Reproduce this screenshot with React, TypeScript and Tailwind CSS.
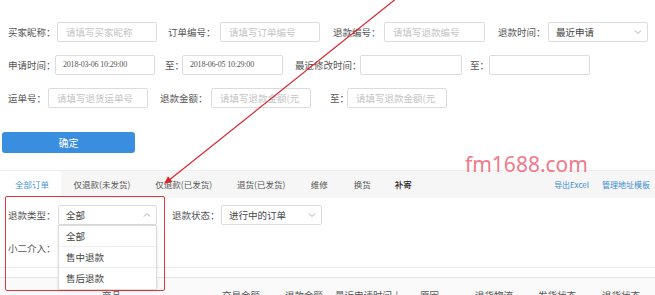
import React from "react";

const Chevron = ({ up = false }: { up?: boolean }) => (
  <svg width="8" height="8" viewBox="0 0 8 8" className="shrink-0">
    <polyline
      points={up ? "1,5.5 4,2.5 7,5.5" : "1,2.5 4,5.5 7,2.5"}
      fill="none"
      stroke="#aaa"
      strokeWidth="1"
    />
  </svg>
);

const Input = ({ w, ph, val }: { w: string; ph?: string; val?: string }) => (
  <div
    className={`${w} h-[20px] border border-[#dcdcdc] rounded-[2px] bg-white flex items-center whitespace-nowrap`}
  >
    {val ? (
      <span className="pl-[7px] text-[8px] tracking-[-0.2px] text-[#555] font-['Liberation_Serif',serif]">{val}</span>
    ) : ph ? (
      <span className="ml-[8px] mr-[10px] flex-1 min-w-0 overflow-hidden text-[9.5px] text-[#c4c4c4]">{ph}</span>
    ) : null}
  </div>
);

const Select = ({ w, val, up = false }: { w: string; val: string; up?: boolean }) => (
  <div
    className={`${w} h-[20px] border border-[#dcdcdc] rounded-[2px] bg-white flex items-center justify-between pl-[7px] pr-[5px] whitespace-nowrap`}
  >
    <span className="text-[9.5px] text-[#444]">{val}</span>
    <Chevron up={up} />
  </div>
);

const Label = ({ w, ml, children }: { w: string; ml?: string; children: React.ReactNode }) => (
  <span className={`${w} ${ml ?? ""} shrink-0 whitespace-nowrap text-[9.5px] text-[#555]`}>{children}</span>
);

export default function App() {
  return (
    <div className="relative w-[655px] h-[295px] overflow-hidden bg-white font-['Noto_Sans_CJK_SC','Noto_Sans',sans-serif] text-[#555]">
      {/* search form */}
      <div className="pt-[22px] pl-[8px] flex flex-col gap-[13px]">
        <div className="flex items-center">
          <Label w="w-[49px]">买家昵称：</Label>
          <Input w="w-[100px]" ph="请填写买家昵称" />
          <Label w="w-[52px]" ml="ml-[11px]">订单编号：</Label>
          <Input w="w-[100px]" ph="请填写订单编号" />
          <Label w="w-[51px]" ml="ml-[13px]">退款编号：</Label>
          <Input w="w-[101px]" ph="请填写退款编号" />
          <Label w="w-[50px]" ml="ml-[13px]">退款时间：</Label>
          <Select w="w-[100px]" val="最近申请" />
        </div>
        <div className="flex items-center">
          <Label w="w-[47px]">申请时间：</Label>
          <Input w="w-[100px]" val="2018-03-06 10:29:00" />
          <Label w="w-[17px]" ml="ml-[10px]">至：</Label>
          <Input w="w-[101px]" val="2018-06-05 10:29:00" />
          <Label w="w-[65px]" ml="ml-[12px]">最近修改时间：</Label>
          <Input w="w-[102px]" />
          <Label w="w-[19px]" ml="ml-[8px]">至：</Label>
          <Input w="w-[101px]" />
        </div>
        <div className="flex items-center">
          <Label w="w-[40px]">运单号：</Label>
          <Input w="w-[100px]" ph="请填写退货运单号" />
          <Label w="w-[51px]" ml="ml-[12px]">退款金额：</Label>
          <Input w="w-[100px]" ph="请填写退款金额(元)" />
          <Label w="w-[17px]" ml="ml-[19px]">至：</Label>
          <Input w="w-[100px]" ph="请填写退款金额(元)" />
        </div>
      </div>

      {/* confirm button */}
      <div className="pl-[2px] mt-[24px]">
        <div className="w-[133px] h-[21px] rounded-[3px] bg-[#3a8ee0] flex items-center justify-center text-white text-[10px]">
          确定
        </div>
      </div>

      {/* tabs */}
      <div className="mt-[17px] h-[28px] bg-[#f6f6f6] border-t border-[#efefef] flex items-stretch text-[8.5px] whitespace-nowrap">
        <div className="pl-[15px] pr-[12px] bg-white flex items-center text-[#4a96d6]">全部订单</div>
        <div className="px-[12.5px] flex items-center text-[#555]">仅退款(未发货)</div>
        <div className="px-[12.5px] flex items-center text-[#555]">仅退款(已发货)</div>
        <div className="px-[12.5px] flex items-center text-[#555]">退货(已发货)</div>
        <div className="px-[13px] flex items-center text-[#555]">维修</div>
        <div className="px-[13px] flex items-center text-[#555]">换货</div>
        <div className="px-[11px] flex items-center text-[#222] font-medium">补寄</div>
        <div className="ml-auto flex items-center gap-[13px] pr-[5px] text-[8px] text-[#3c8dd0]">
          <span>导出Excel</span>
          <span>管理地址模板</span>
        </div>
      </div>

      {/* filters */}
      <div className="pl-[8px] pt-[7px]">
        <div className="flex items-center">
          <Label w="w-[50px]">退款类型：</Label>
          <Select w="w-[99px]" val="全部" up />
          <Label w="w-[49px]" ml="ml-[15px]">退款状态：</Label>
          <Select w="w-[101px]" val="进行中的订单" />
        </div>
        <div className="mt-[13px] h-[20px] flex items-center">
          <Label w="w-[50px]">小二介入：</Label>
        </div>
      </div>
      <div className="mt-[9px] border-t border-[#ececec] h-[10px]" />
      <div className="border-t border-[#e6e6e6] bg-[#fafafa] h-[30px] pt-[10px] flex text-[9.5px] text-[#555] whitespace-nowrap">
        <span className="w-[222px] pl-[102px]">商品</span>
        <span className="w-[63px]">交易金额</span>
        <span className="w-[50px]">退款金额</span>
        <span className="w-[85px]">最近申请时间↓</span>
        <span className="w-[55px]">原因</span>
        <span className="w-[63px]">退货物流</span>
        <span className="w-[64px]">发货状态</span>
        <span>退货状态</span>
      </div>

      {/* dropdown menu */}
      <div className="absolute left-[58px] top-[225px] w-[99px] bg-white border border-[#dcdcdc] shadow-sm text-[9.5px] text-[#444]">
        <div className="h-[21px] border-b border-[#eee] flex items-center pl-[7px]">全部</div>
        <div className="h-[21px] border-b border-[#eee] flex items-center pl-[7px]">售中退款</div>
        <div className="h-[21px] flex items-center pl-[7px]">售后退款</div>
      </div>

      {/* red highlight box */}
      <div className="absolute left-[5px] top-[196px] w-[160px] h-[95px] border-[1.5px] border-[#e0363e] rounded-[2px]" />

      {/* watermark */}
      <div className="absolute left-[465px] top-[151px] text-[21px] leading-[26px] text-[#f27a8a] font-['Noto_Sans',sans-serif]">
        fm1688.com
      </div>

      {/* red arrow */}
      <svg className="absolute left-0 top-0 pointer-events-none" width="655" height="295" viewBox="0 0 655 295">
        <line x1="397" y1="-2" x2="168" y2="181" stroke="#d8262e" strokeWidth="1.2" />
        <polygon points="164,184 172.4,181.7 168,176.3" fill="#d8262e" />
      </svg>
    </div>
  );
}
